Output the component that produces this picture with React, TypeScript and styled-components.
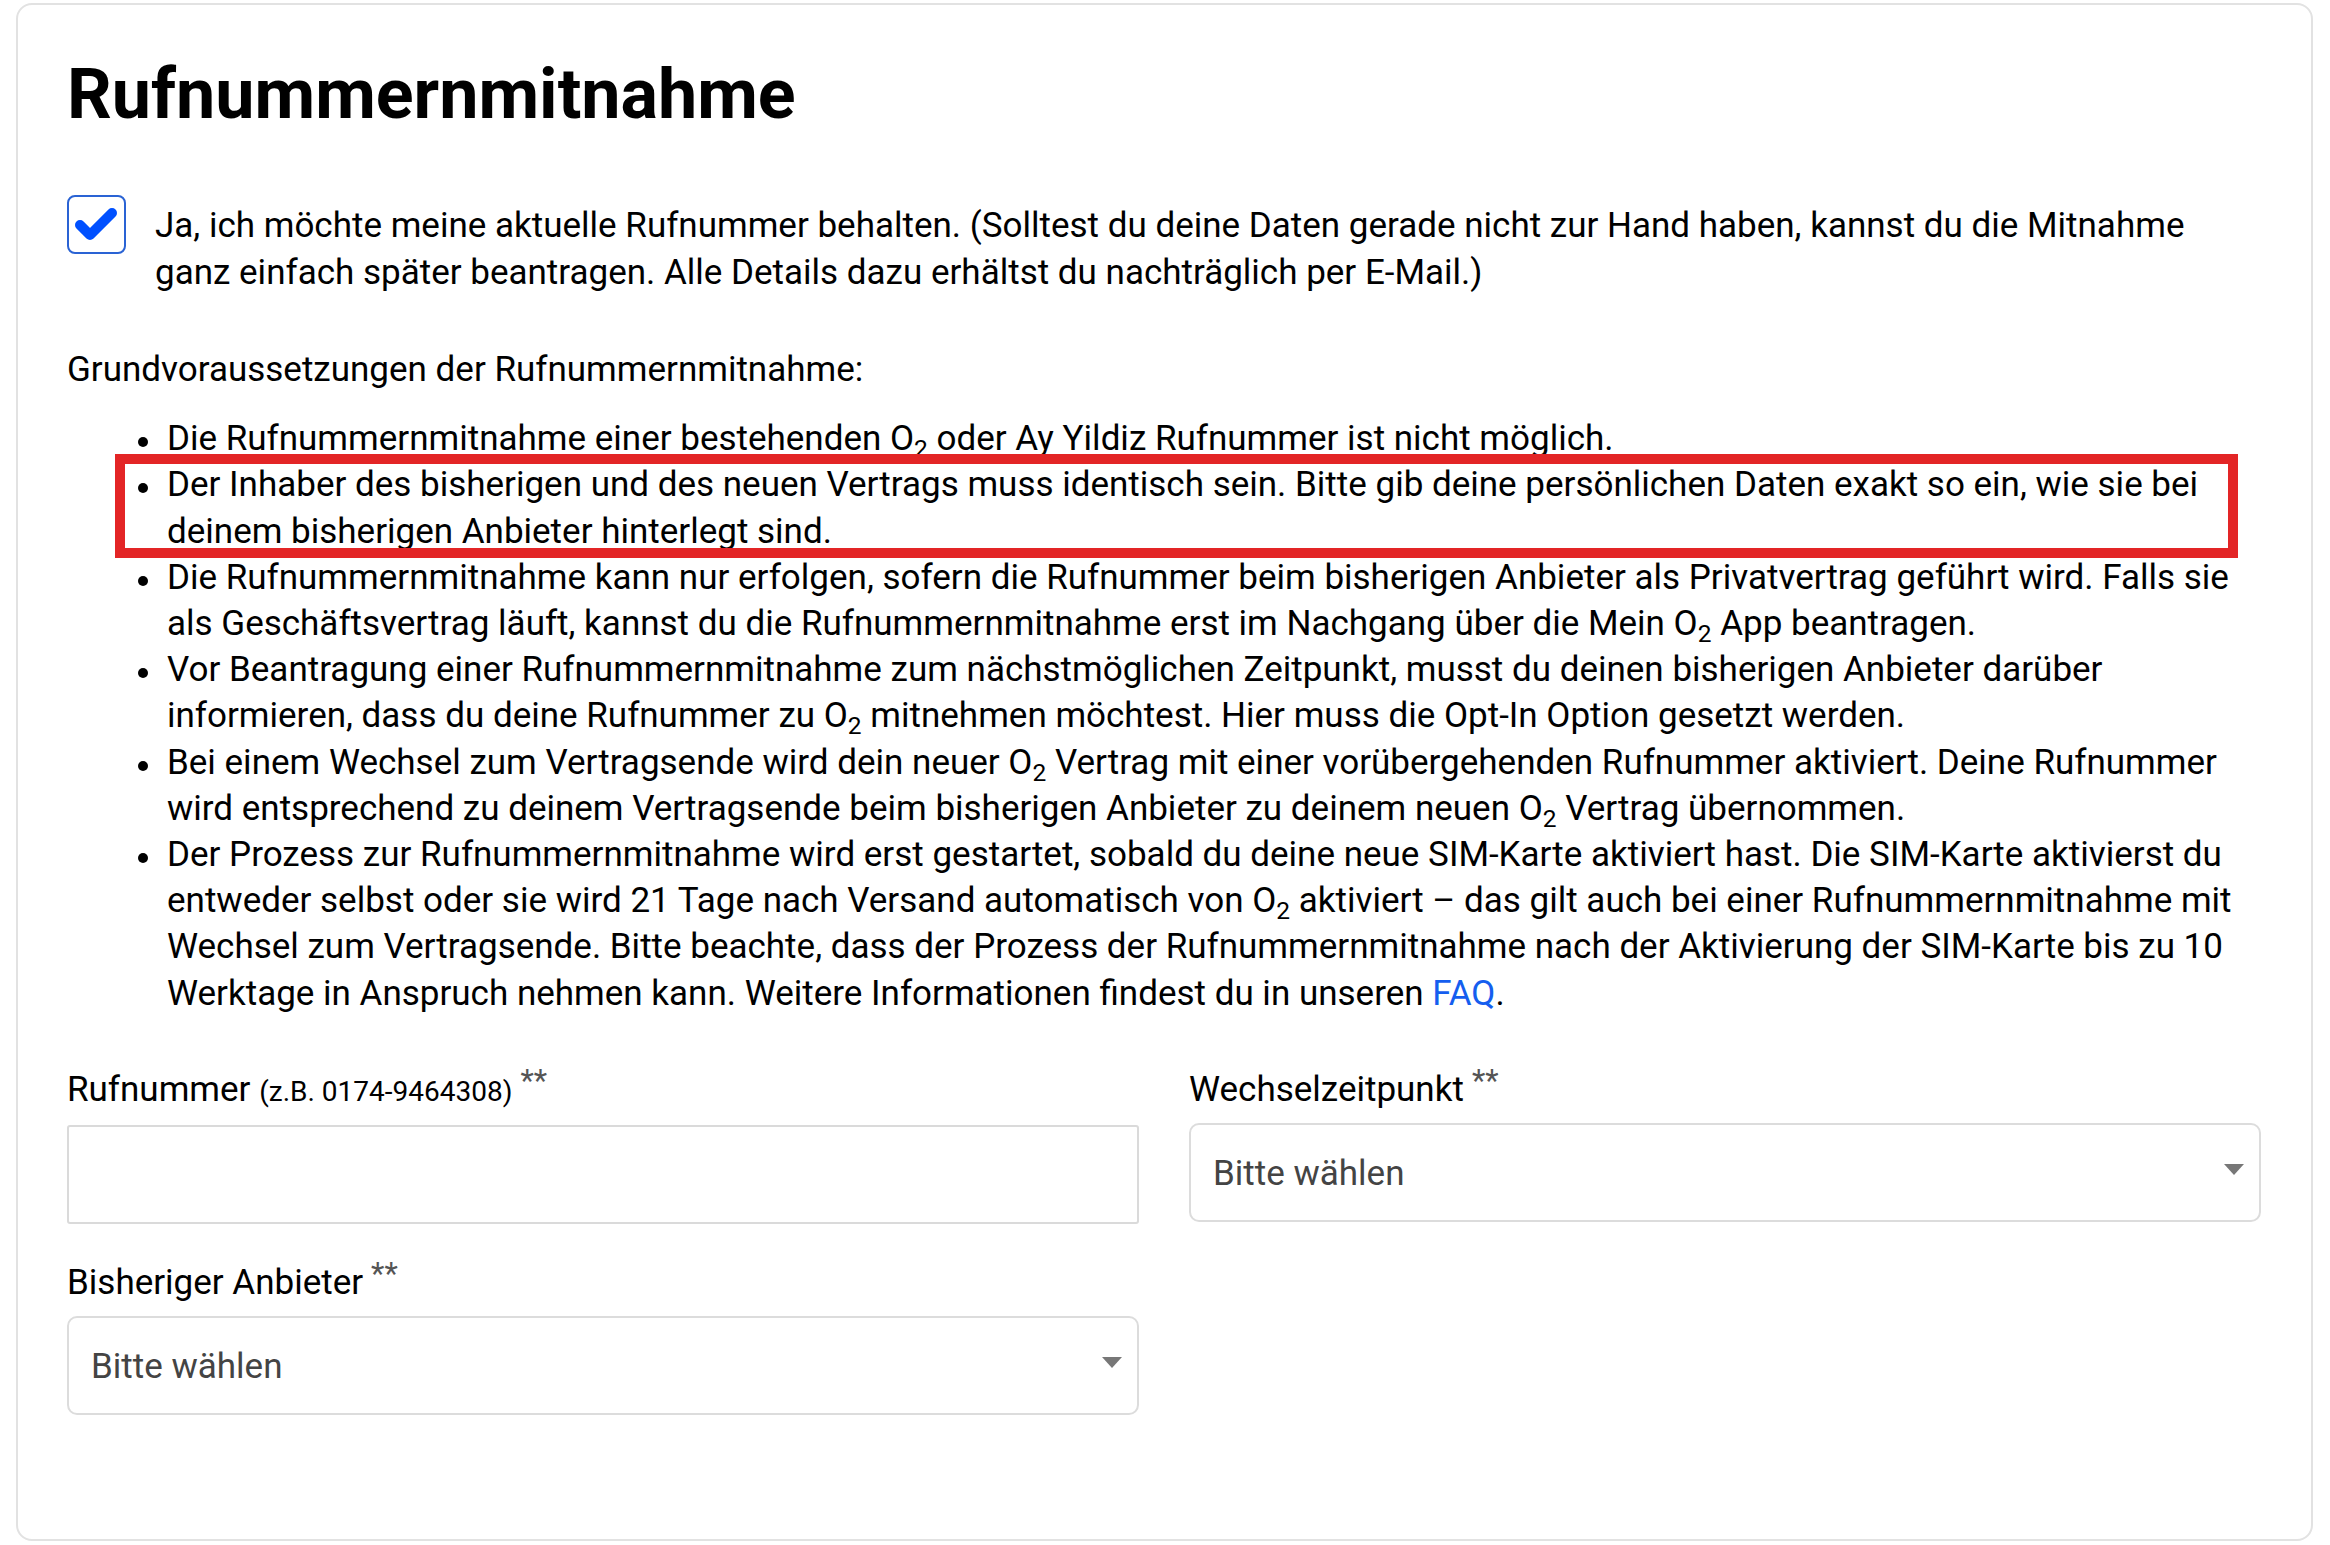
import React from "react";
import styled, { createGlobalStyle } from "styled-components";

const GlobalStyle = createGlobalStyle`
  html, body {
    margin: 0;
    padding: 0;
    background: #fff;
  }
  body {
    font-family: Roboto, "Liberation Sans", Arial, sans-serif;
    color: #111;
  }
  * { box-sizing: border-box; }
`;

const Page = styled.div`
  padding: 3px 17px 4px 16px;
`;

const Card = styled.section`
  min-height: 1538px;
  border: 2px solid #e2e2e2;
  border-radius: 16px;
  padding: 47px 50px 60px 49px;
  background: #fff;
`;

const Title = styled.h1`
  margin: 0;
  font-size: 70px;
  line-height: 84px;
  font-weight: 700;
  color: #000;
`;

const CheckRow = styled.label`
  display: flex;
  align-items: flex-start;
  margin-top: 59px;
  cursor: pointer;
`;

const CheckBox = styled.span`
  flex: none;
  width: 59px;
  height: 59px;
  border: 2px solid #2a63d4;
  border-radius: 8px;
  display: flex;
  align-items: center;
  justify-content: center;
`;

const CheckText = styled.span`
  flex: 1;
  margin: 8px 60px 0 29px;
  font-size: 35px;
  line-height: 46.5px;
  color: #000;
`;

const Intro = styled.p`
  margin: 51px 0 0;
  font-size: 35px;
  line-height: 46.2px;
  color: #000;
`;

const Rules = styled.ul`
  list-style: none;
  margin: 23px 0 0;
  padding: 0 0 0 100px;
  font-size: 35px;
  line-height: 46.2px;
  color: #000;
`;

const Rule = styled.li`
  position: relative;

  &::before {
    content: "";
    position: absolute;
    left: -29px;
    top: 21px;
    width: 10px;
    height: 10px;
    border-radius: 50%;
    background: #000;
  }
`;

// red annotation frame laid over one of the list items
const Highlight = styled.span`
  position: absolute;
  top: -8px;
  bottom: -3px;
  left: -52px;
  right: 23px;
  border: 10px solid #e32526;
  pointer-events: none;
`;

const Sub = styled.sub`
  font-size: 0.7em;
  line-height: 0;
  vertical-align: -0.28em;
`;

const Link = styled.a`
  color: #155eef;
  text-decoration: none;
`;

const Fields = styled.div`
  display: grid;
  grid-template-columns: 1fr 1fr;
  column-gap: 50px;
  row-gap: 27px;
  margin-top: 41px;
`;

const Field = styled.div`
  display: flex;
  flex-direction: column;
`;

const Label = styled.div`
  font-size: 35px;
  line-height: 46px;
  margin-bottom: 10px;
  color: #000;
`;

const Hint = styled.span`
  font-size: 28px;
`;

const Required = styled.span`
  font-size: 31px;
  color: #555;
  vertical-align: 10px;
  margin-left: 8px;
`;

const TextInput = styled.input`
  height: 99px;
  width: 100%;
  border: 2px solid #dadada;
  border-radius: 3px;
  padding: 0 22px;
  font: inherit;
  font-size: 35px;
  outline: none;
`;

const SelectBox = styled.div`
  height: 99px;
  border: 2px solid #dcdcdc;
  border-radius: 10px;
  padding: 4px 15px 0 22px;
  display: flex;
  align-items: center;
  justify-content: space-between;
  font-size: 35px;
  line-height: 46px;
  color: #444;
  cursor: pointer;
`;

const Caret = () => (
  <svg width="20" height="11" viewBox="0 0 20 11" style={{ marginTop: -10 }}>
    <path d="M0 0 H20 L10 11 Z" fill="#777" />
  </svg>
);

const O2 = () => (
  <>
    O<Sub>2</Sub>
  </>
);

function Select({ value }: { value: string }) {
  return (
    <SelectBox>
      <span>{value}</span>
      <Caret />
    </SelectBox>
  );
}

export default function App() {
  return (
    <>
      <GlobalStyle />
      <Page>
        <Card>
          <Title>Rufnummernmitnahme</Title>

          <CheckRow>
            <CheckBox>
              <svg width="44" height="38" viewBox="0 0 44 38">
                <path
                  d="M5 19 L15 29 L37 7"
                  fill="none"
                  stroke="#0050ff"
                  strokeWidth="10"
                  strokeLinecap="round"
                  strokeLinejoin="round"
                />
              </svg>
            </CheckBox>
            <CheckText>
              Ja, ich möchte meine aktuelle Rufnummer behalten. (Solltest du deine Daten gerade nicht zur
              Hand haben, kannst du die Mitnahme ganz einfach später beantragen. Alle Details dazu erhältst
              du nachträglich per E-Mail.)
            </CheckText>
          </CheckRow>

          <Intro>Grundvoraussetzungen der Rufnummernmitnahme:</Intro>

          <Rules>
            <Rule>
              Die Rufnummernmitnahme einer bestehenden <O2 /> oder Ay Yildiz Rufnummer ist nicht möglich.
            </Rule>
            <Rule>
              Der Inhaber des bisherigen und des neuen Vertrags muss identisch sein. Bitte gib deine
              persönlichen Daten exakt so ein, wie sie bei deinem bisherigen Anbieter hinterlegt sind.
              <Highlight />
            </Rule>
            <Rule>
              Die Rufnummernmitnahme kann nur erfolgen, sofern die Rufnummer beim bisherigen Anbieter als
              Privatvertrag geführt wird. Falls sie als Geschäftsvertrag läuft, kannst du die
              Rufnummernmitnahme erst im Nachgang über die Mein <O2 /> App beantragen.
            </Rule>
            <Rule>
              Vor Beantragung einer Rufnummernmitnahme zum nächstmöglichen Zeitpunkt, musst du deinen
              bisherigen Anbieter darüber informieren, dass du deine Rufnummer zu <O2 /> mitnehmen
              möchtest. Hier muss die Opt-In Option gesetzt werden.
            </Rule>
            <Rule>
              Bei einem Wechsel zum Vertragsende wird dein neuer <O2 /> Vertrag mit einer vorübergehenden
              Rufnummer aktiviert. Deine Rufnummer wird entsprechend zu deinem Vertragsende beim bisherigen
              Anbieter zu deinem neuen <O2 /> Vertrag übernommen.
            </Rule>
            <Rule>
              Der Prozess zur Rufnummernmitnahme wird erst gestartet, sobald du deine neue SIM-Karte
              aktiviert hast. Die SIM-Karte aktivierst du entweder selbst oder sie wird 21 Tage nach
              Versand automatisch von <O2 /> aktiviert – das gilt auch bei einer Rufnummernmitnahme mit
              Wechsel zum Vertragsende. Bitte beachte, dass der Prozess der Rufnummernmitnahme nach der
              Aktivierung der SIM-Karte bis zu 10 Werktage in Anspruch nehmen kann. Weitere Informationen
              findest du in unseren <Link href="#">FAQ</Link>.
            </Rule>
          </Rules>

          <Fields>
            <Field>
              <Label>
                Rufnummer <Hint>(z.B. 0174-9464308)</Hint>
                <Required>**</Required>
              </Label>
              <TextInput type="text" />
            </Field>
            <Field>
              <Label>
                Wechselzeitpunkt<Required>**</Required>
              </Label>
              <Select value="Bitte wählen" />
            </Field>
            <Field>
              <Label>
                Bisheriger Anbieter<Required>**</Required>
              </Label>
              <Select value="Bitte wählen" />
            </Field>
          </Fields>
        </Card>
      </Page>
    </>
  );
}
